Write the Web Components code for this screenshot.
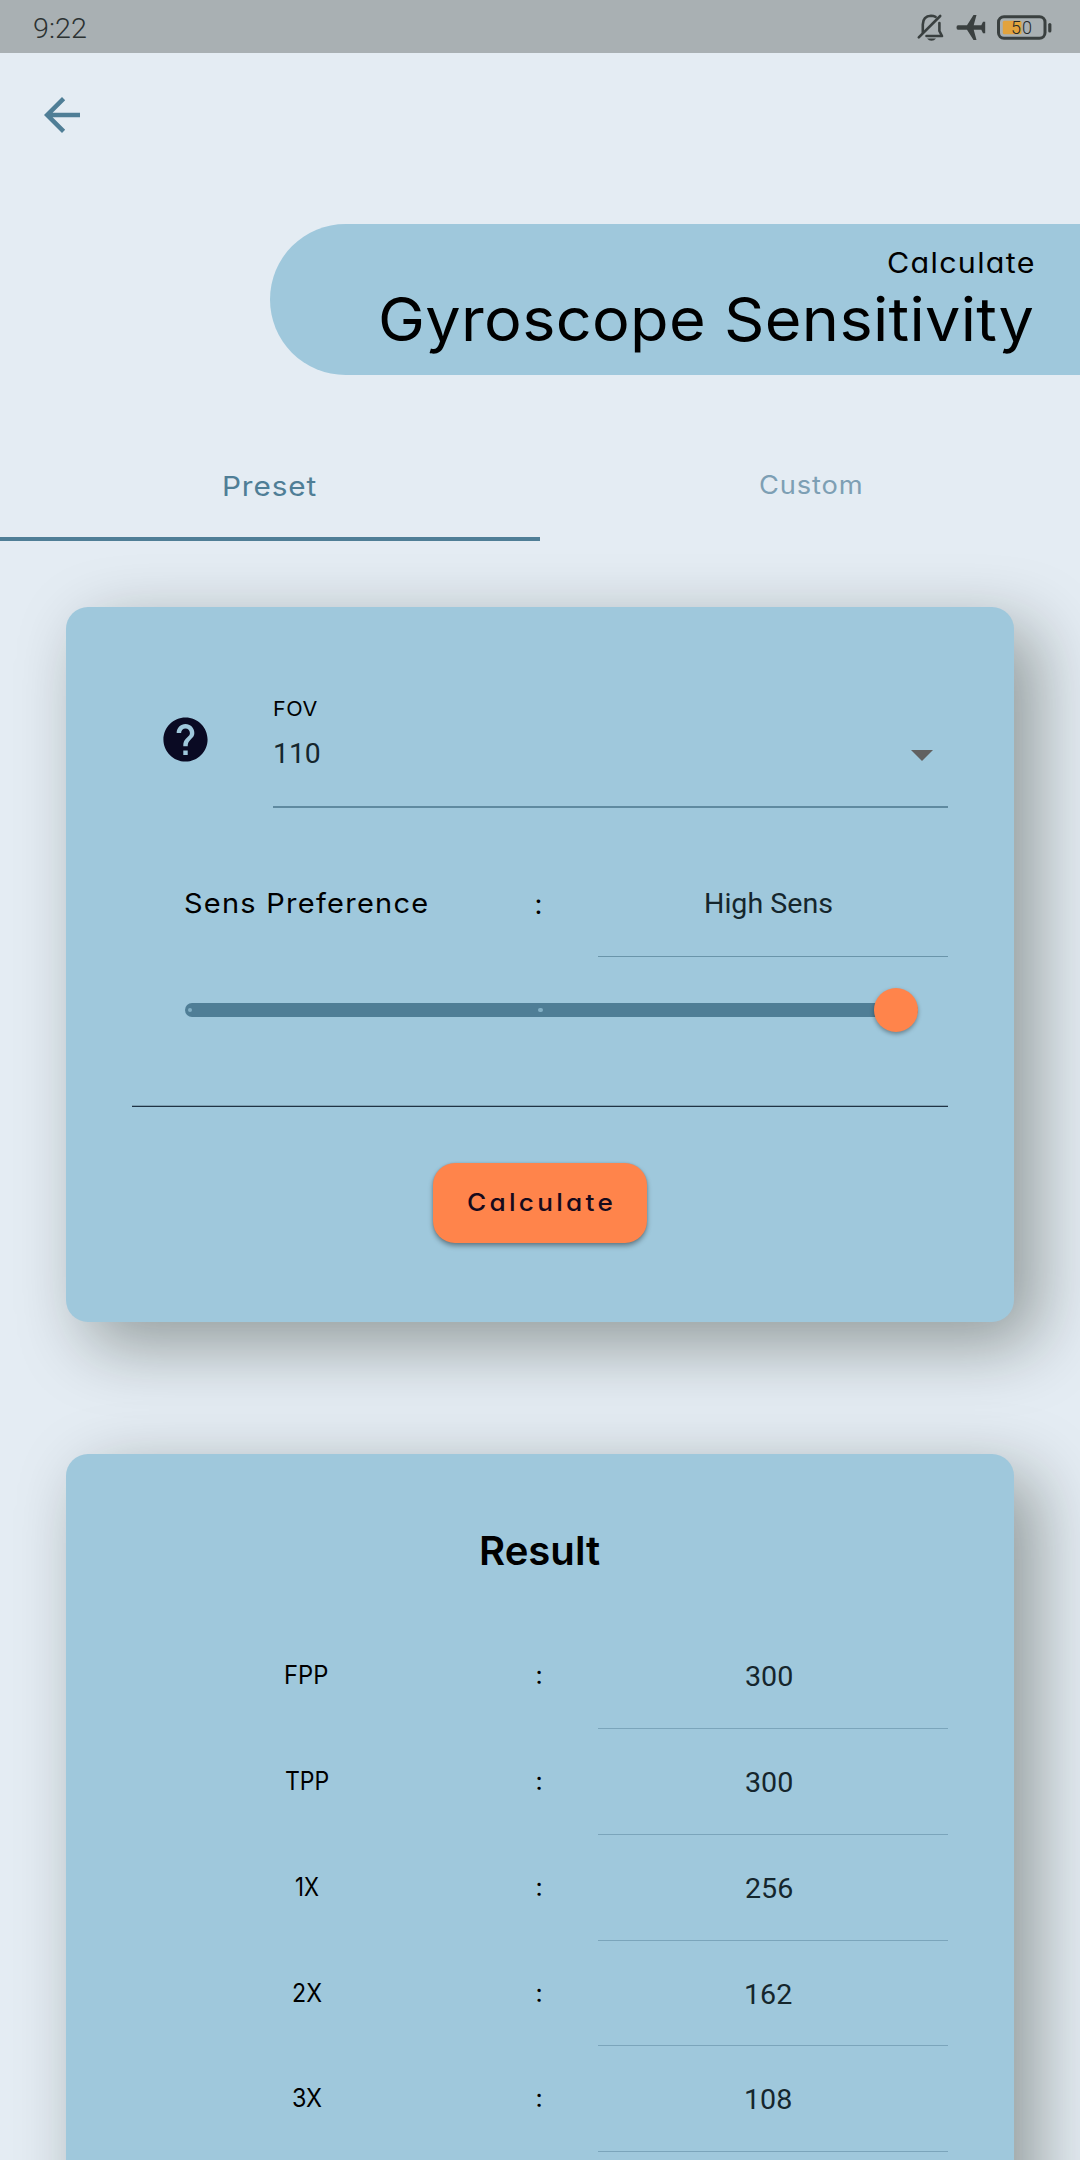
<!DOCTYPE html>
<html lang="en">
<head>
<meta charset="utf-8">
<title>Gyroscope Sensitivity</title>
<style>
  html, body { margin: 0; height: 2160px; overflow: hidden; background: #e4ecf3; }
  body { font-family: Inter, "Open Sans", sans-serif; color: #000; }
</style>
</head>
<body>
<gyro-app></gyro-app>
<script>
const define = (name, html, extra) => {
  const tpl = document.createElement('template');
  tpl.innerHTML = html;
  customElements.define(name, class extends HTMLElement {
    connectedCallback() {
      if (this.shadowRoot) return;
      this.attachShadow({ mode: 'open' }).appendChild(tpl.content.cloneNode(true));
      if (extra) extra.call(this, this.shadowRoot);
    }
  });
};

// Text with tracking "ls", stretched horizontally so that its ink spans exactly "w" pixels.
define('fit-text', `
  <style>
    :host { display: block; flex: none; white-space: nowrap; font-feature-settings: "cv11"; }
    span { display: inline-block; transform-origin: 0 50%; }
  </style><span></span>`, function (root) {
  const span = root.querySelector('span');
  const text = this.getAttribute('text');
  const w = +this.getAttribute('w');
  const size = +this.getAttribute('size');
  const ls = +(this.getAttribute('ls') || 0);
  span.textContent = text;
  this.style.fontSize = size + 'px';
  this.style.width = w + 'px';
  span.style.letterSpacing = ls + 'px';
  const cs = getComputedStyle(this);
  const ctx = document.createElement('canvas').getContext('2d');
  ctx.font = `${cs.fontWeight} ${size}px ${cs.fontFamily}`;
  const m = ctx.measureText(text);
  const left = -m.actualBoundingBoxLeft;
  const right = m.width - m.actualBoundingBoxRight;
  const ink = span.getBoundingClientRect().width - left - right - ls;
  const k = text.length > 1 ? w / ink : 1;
  span.style.transform = `scaleX(${k})`;
  span.style.marginLeft = (-left * k) + 'px';
});

define('status-bar', `
  <style>
    :host { display: flex; flex: none; height: 53px; background: #a9b0b3; align-items: center; box-sizing: border-box;
      padding: 4px 28px 0 34px; color: #2c3232; font-family: Roboto, sans-serif; }
    fit-text { line-height: 52px; height: 51px; font-weight: 300; }
    .gap { flex: 1; }
    svg { display: block; margin: -3px 0 0 0; }
  </style>
  <fit-text text="9:22" w="52" size="28.500"></fit-text>
  <div class="gap"></div>
  <svg width="136" height="30" viewBox="0 0 136 30" fill="none" stroke="#3a4040">
    <g stroke-width="2.6" stroke-linecap="round" stroke-linejoin="round">
      <path d="M6.8 20.2V12.5Q7 4 15 3.7Q17.5 3.7 19.6 4.800M23.400 11V19L26 24H10.5"/>
      <path d="M2.8 25.4L24.2 4"/>
    </g>
    <path d="M11 26.500h9q-1.800 2.200-4.500 2.200t-4.500-2.200z" fill="#3a4040" stroke="none"/>
    <path d="M42 13.300h9L57.500 3h3l-2.800 10.300h7.600l1.700-3.600h2.200v11.600H67l-1.700-3.600h-7.600L60.500 28h-3L51 17.700h-9q-1.500 0-1.500-2.200t1.500-2.200z" fill="#3a4040" stroke="none"/>
    <rect x="82.500" y="4.700" width="46.500" height="21.600" rx="5.500" stroke-width="3"/>
    <rect x="86.800" y="8.700" width="18.700" height="13.600" rx="1.500" fill="#e2a33d" stroke="none"/>
    <path d="M133.800 12.500v6.500" stroke-width="3.200" stroke-linecap="round"/>
    <text x="95" y="22" font-family="Roboto, sans-serif" font-weight="300" font-size="18" textLength="21" fill="#24292a" stroke="none">50</text>
  </svg>`);

define('app-bar', `
  <style>
    :host { display: block; flex: none; height: 171px; padding: 34.500px 0 0 35px; box-sizing: border-box; }
    svg { display: block; }
  </style>
  <svg width="54" height="54" viewBox="0 0 24 24" fill="#4f7e96"><path d="M20 11H7.830l5.590-5.590L12 4l-8 8 8 8 1.410-1.410L7.830 13H20v-2z"/></svg>`);

define('page-title', `
  <style>
    :host { display: flex; flex: none; flex-direction: column; align-items: flex-end; box-sizing: border-box;
      height: 151px; margin: .4px 0 0 270px; padding: 19px 47px 0 0; background: #9fc8dc; border-radius: 76px 0 0 76px; }
    .small { line-height: 40px; }
    .big { line-height: 73px; }
  </style>
  <fit-text class="small" text="Calculate" w="145" size="28" ls="1.200"></fit-text>
  <fit-text class="big" text="Gyroscope Sensitivity" w="652" size="60" ls=".3"></fit-text>`);

define('tab-item', `
  <style>
    :host { display: flex; flex: 1; justify-content: center; box-sizing: border-box; height: 111px;
      padding-top: 35px; border-bottom: 4.500px solid transparent; color: #7d9fb4; line-height: 40px; }
    :host([active]) { color: #4f7e96; border-color: #4f7e96; padding-top: 36px; }
  </style><slot></slot>`);

define('tab-bar', `
  <style>:host { display: flex; flex: none; margin-top: 54.600px; } </style>
  <tab-item active><fit-text text="Preset" w="92" size="27.500" ls=".8"></fit-text></tab-item>
  <tab-item><fit-text text="Custom" w="100.500" size="25" ls=".8"></fit-text></tab-item>`);

define('shadow-card', `
  <style>
    :host { display: flex; flex-direction: column; box-sizing: border-box; margin: 0 66px; padding: 0 66px;
      background: #9fc8dc; border-radius: 22px; box-shadow: 22px 22px 68px rgba(8,18,4,.375); }
  </style><slot></slot>`);

define('value-row', `
  <style>
    :host { display: flex; flex: none; height: var(--row-h, 105.800px); align-items: stretch; }
    .label { width: 348px; display: flex; justify-content: center; line-height: 104px; box-sizing: border-box; padding-left: 2px; }
    .colon { width: 118px; line-height: 104px; }
    .value { width: 350px; box-sizing: border-box; display: flex; justify-content: center; padding-right: 8px;
      border-bottom: 1px solid var(--line, #7ba5bb); font-family: Roboto, sans-serif; color: #15262d; line-height: 108px; }
    :host([wide]) .label { justify-content: flex-start; padding-left: 53px; line-height: 105px; }
    :host([wide]) .colon { line-height: 106px; }
    :host([wide]) .value { line-height: 106px; }
  </style>
  <div class="label"></div><div class="colon"></div><div class="value"></div>`,
function (root) {
  const put = (sel, text, w, size, ls) => {
    const t = document.createElement('fit-text');
    const attrs = { text, w, size, ls };
    for (const key in attrs) t.setAttribute(key, attrs[key]);
    root.querySelector(sel).replaceChildren(t);
    return t;
  };
  const size = this.getAttribute('size') || 25;
  put('.label', this.getAttribute('label'), this.getAttribute('lw'), size, this.hasAttribute('wide') ? 1.2 : 0);
  put('.colon', ':', 4, size, 0).style.marginLeft = '56.500px';
  put('.value', this.getAttribute('value'), this.getAttribute('vw'), 28, 0);
});

define('select-field', `
  <style>
    :host { display: flex; flex: none; height: 130px; margin-top: 71px; }
    .icon { width: 141px; padding: 35px 0 0 26.500px; box-sizing: border-box; }
    svg { display: block; }
    .field { flex: 1; border-bottom: 2px solid #5f8aa0; padding: 16px 0 0 1px; display: flex; flex-direction: column; }
    .field > fit-text { line-height: 30px; }
    .row { display: flex; justify-content: space-between; align-items: center; height: 60px; padding: 0 15.500px 0 1px;
      font-family: Roboto, sans-serif; color: #15262d; line-height: 62px; }
    .row svg { margin-top: 3px; }
  </style>
  <div class="icon"><svg width="53" height="53" viewBox="0 0 24 24" fill="#0a0a23"><path d="M12 2C6.480 2 2 6.480 2 12s4.480 10 10 10 10-4.480 10-10S17.520 2 12 2zm1 17h-2v-2h2v2zm2.070-7.750l-.9.920C13.450 12.900 13 13.500 13 15h-2v-.5c0-1.100.450-2.100 1.170-2.830l1.240-1.260c.370-.360.590-.860.590-1.410 0-1.100-.9-2-2-2s-2 .9-2 2H8c0-2.210 1.790-4 4-4s4 1.790 4 4c0 .880-.360 1.680-.930 2.250z"/></svg></div>
  <div class="field">
    <fit-text text="FOV" w="43" size="20.500" ls=".5"></fit-text>
    <div class="row"><fit-text text="110" w="45" size="28"></fit-text>
      <svg width="22" height="11" viewBox="0 0 22 11"><path d="M0 0h22L11 11z" fill="#616161"/></svg></div>
  </div>`);

define('sens-slider', `
  <style>
    :host { display: flex; flex: none; align-items: center; height: 44px; margin: 31px 30.500px 1px 53px; }
    .track { flex: 1; display: flex; align-items: center; height: 13.500px; border-radius: 7px; background: #4f7e96; }
    i { flex: none; width: 4.500px; height: 4.500px; border-radius: 50%; background: #82b0c6; margin-left: 2.500px; }
    i + i { margin-left: 346px; }
    b { flex: none; width: 44px; height: 44px; border-radius: 50%; background: #ff844b; margin: 0 0 0 -44px; position: relative;
      box-shadow: 0 2px 4px rgba(0,0,0,.35); }
  </style><div class="track"><i></i><i></i></div><b></b>`);

define('calc-button', `
  <style>
    :host { display: flex; flex: none; justify-content: center; align-self: center; width: 214px; height: 80px; margin-top: 56px;
      border-radius: 22px; background: #ff844b; color: #170a1c; line-height: 79px; font-weight: 500;
      box-shadow: 0 3px 5px rgba(0,0,0,.36), 0 0 2px rgba(0,0,0,.15); }
  </style><fit-text text="Calculate" w="143.500" size="24" ls="3"></fit-text>`);

define('gyro-app', `
  <style>
    :host { display: flex; flex-direction: column; width: 1080px; height: 2160px; overflow: hidden; background: #e4ecf3; }
    .form { margin-top: 66px; height: 715px; flex: none; }
    .result { margin-top: 132px; height: 900px; flex: none; }
    .sens { --row-h: 106px; --line: #6a95aa; margin-top: 43px; }
    hr { border: 0; height: 1px; border-top: 1px solid #7d9fb1; background: #1f3345; margin: 72px 0 0; width: 100%; flex: none; }
    h2 { margin: 0; height: 169.200px; box-sizing: border-box; padding-top: 66px; display: flex; justify-content: center;
      line-height: 61px; font-weight: 600; flex: none; }
  </style>
  <status-bar></status-bar>
  <app-bar></app-bar>
  <page-title></page-title>
  <tab-bar></tab-bar>
  <shadow-card class="form">
    <select-field></select-field>
    <value-row class="sens" wide size="27.500" label="Sens Preference" lw="242" value="High Sens" vw="126.500"></value-row>
    <sens-slider></sens-slider>
    <hr>
    <calc-button></calc-button>
  </shadow-card>
  <shadow-card class="result">
    <h2><fit-text text="Result" w="119" size="40"></fit-text></h2>
    <value-row label="FPP" lw="41.500" value="300" vw="46.500"></value-row>
    <value-row label="TPP" lw="42.500" value="300" vw="46.500"></value-row>
    <value-row label="1X" lw="23" value="256" vw="46.500"></value-row>
    <value-row label="2X" lw="29" value="162" vw="45.500"></value-row>
    <value-row label="3X" lw="29" value="108" vw="45.500"></value-row>
  </shadow-card>`);
</script>
</body>
</html>
